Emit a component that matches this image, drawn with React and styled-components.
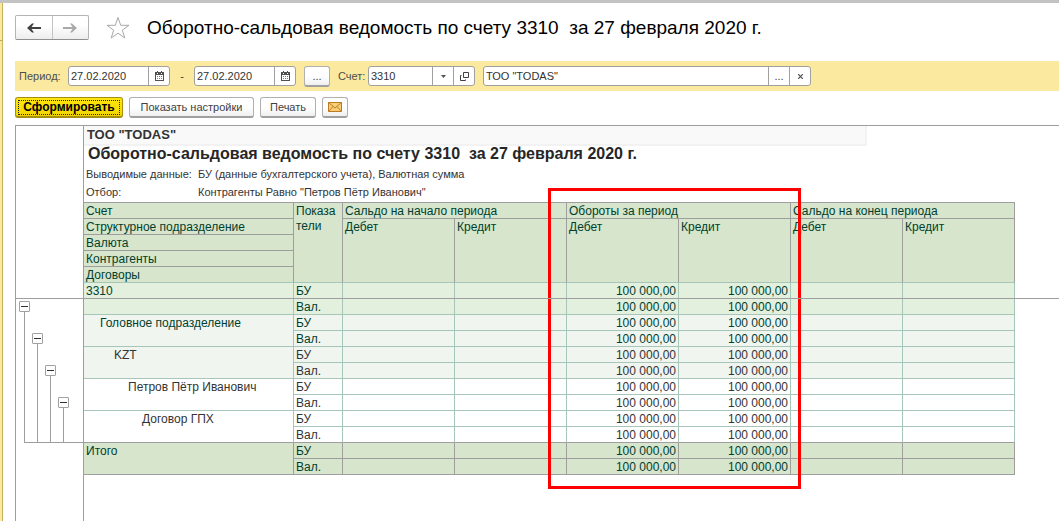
import React from "react";
import styled, { createGlobalStyle, css } from "styled-components";

const line = "#9e9e9e";
const mint = "#a6c6b9";
const ink = "#003f2f";

const GlobalStyle = createGlobalStyle`
  *, *::before, *::after { box-sizing: border-box; }
  html, body, #root { height: 100%; }
  body {
    margin: 0;
    background: #fff;
    color: #404040;
    font: 12px/16px "Liberation Sans", Arial, sans-serif;
  }
  button, input { font: inherit; color: inherit; }
`;

const Window = styled.div`
  display: flex;
  min-height: 100%;
  border-top: 3px solid #c3c3c3;
`;

const SideStrip = styled.aside`
  flex: none;
  width: 3px;
  background: linear-gradient(#c0a850, #c0a850) 0 37px / 100% 1px no-repeat #fce9a0;
  border-right: 1px solid #c6b45f;
`;

const Main = styled.main`
  flex: 1;
  min-width: 0;
  display: flex;
  flex-direction: column;
  padding: 12px 0 0 12px;
`;

const TitleBar = styled.header`
  display: flex;
  align-items: center;
  height: 25px;
  margin-bottom: 21px;
`;

const NavGroup = styled.div`
  display: flex;
  width: 74px;
  height: 25px;
  border: 1px solid #b4b4b4;
  border-bottom-color: #909090;
  border-radius: 2px;
  background: linear-gradient(#fff 40%, #ededed);
`;

const NavButton = styled.button`
  flex: 1;
  display: grid;
  place-items: center;
  padding: 0;
  border: 0;
  background: none;
  color: ${(p) => (p.$dim ? "#a9a9a9" : "#404040")};
  & + & { border-left: 1px solid #c4c4c4; }
`;

const StarButton = styled.button`
  display: grid;
  place-items: center;
  width: 24px;
  height: 25px;
  margin: 0 17px;
  padding: 0;
  border: 0;
  background: none;
`;

const Title = styled.h1`
  margin: 0;
  font-size: 19px;
  line-height: 26px;
  font-weight: 400;
  color: #000;
  white-space: pre;
`;

const FilterBar = styled.section`
  display: flex;
  align-items: center;
  height: 30px;
  padding-left: 4px;
  background: #fce9a0;
  font-size: 11px;
`;

const Label = styled.label`
  width: ${(p) => p.$w}px;
  color: #4d4d4d;
  white-space: nowrap;
`;

const Dash = styled.span`
  width: 24px;
  text-align: center;
`;

const Field = styled.div`
  display: flex;
  flex: 0 1 ${(p) => p.$w}px;
  height: 20px;
  margin-right: ${(p) => p.$gap || 0}px;
  border: 1px solid #a0a0a0;
  border-radius: 3px;
  background: #fff;
  overflow: hidden;
`;

const TextInput = styled.input`
  flex: 1;
  min-width: 0;
  padding: 0 2px;
  border: 0;
  outline: 0;
  background: none;
  color: #333;
`;

const FieldButton = styled.button`
  flex: none;
  display: grid;
  place-items: center;
  width: 21px;
  padding: 0;
  border: 0;
  border-left: 1px solid #a0a0a0;
  background: none;
  color: #404040;
`;

const Button = styled.button`
  display: grid;
  place-items: center;
  width: ${(p) => p.$w}px;
  height: 21px;
  padding: 0;
  border: 1px solid #b0b0b0;
  border-bottom: 2px solid #a0a0a0;
  border-radius: 3px;
  background: linear-gradient(#fff 50%, #f0f0f0);
  color: #404040;
  font-size: 11px;
  line-height: 16px;
  white-space: nowrap;
  ${(p) =>
    p.$primary &&
    css`
      border-color: #a68f10;
      background: linear-gradient(#ffe60d, #f3d600);
      color: #000;
      font-size: 12px;
      font-weight: 700;
      outline: 1px dotted #10204a;
      outline-offset: -4px;
    `}
`;

const MoreButton = styled(Button)`
  margin: 0 8px;
`;

const Commands = styled.div`
  display: flex;
  gap: 6px;
  padding: 6px 0 7px;
`;

const Sheet = styled.section`
  position: relative;
  flex: 1;
  display: flex;
  border-top: 1px solid ${line};
  border-left: 1px solid ${line};
`;

const FreezeLine = styled.div`
  position: absolute;
  top: 172px;
  left: 0;
  right: 0;
  height: 1px;
  background: ${line};
`;

const Gutter = styled.div`
  flex: none;
  width: 68px;
  padding: 175px 0 0 3px;
  border-right: 1px solid ${line};
`;

const Tree = styled.div`
  display: flex;
  gap: 2px;
  height: 141px;
`;

const TreeLevel = styled.div`
  display: flex;
  flex-direction: column;
  align-items: center;
  width: 11px;
  padding-top: ${(p) => p.$level * 32}px;
  &::after {
    content: "";
    flex: 1;
    width: 1px;
    background: ${line};
  }
`;

const Toggle = styled.button`
  display: grid;
  place-items: center;
  width: 11px;
  height: 11px;
  padding: 0;
  border: 1px solid #a0a0a0;
  border-radius: 1px;
  background: #fff;
  &::before {
    content: "";
    width: 7px;
    height: 1px;
    background: #303030;
  }
`;

const TreeEnd = styled.div`
  height: 1px;
  margin-left: 5px;
  background: ${line};
`;

const Report = styled.div`
  flex: 1;
  min-width: 0;
`;

const Organization = styled.div`
  max-width: 783px;
  height: 20px;
  padding-left: 3px;
  border: solid #f2f2f2;
  border-width: 0 2px 2px 0;
  background: #f9f9f9;
  color: #333;
  font-size: 13px;
  line-height: 17px;
  font-weight: 700;
`;

const ReportTitle = styled.h2`
  margin: 0;
  padding-left: 4px;
  color: #262626;
  font-size: 16px;
  line-height: 15px;
  font-weight: 700;
  white-space: pre;
`;

const Meta = styled.dl`
  display: grid;
  grid-template-columns: 112px 1fr;
  margin: 0;
  padding: 4px 0 1px 2px;
  color: #333;
  font-size: 11px;
  line-height: 18px;
`;

const MetaText = styled.dd`
  margin: 0;
  white-space: nowrap;
`;

const TableWrap = styled.div`
  position: relative;
  width: 931px;
`;

const Highlight = styled.div`
  position: absolute;
  top: -14px;
  left: 464px;
  width: 253px;
  height: 301px;
  border: 3px solid #f00;
  pointer-events: none;
`;

const Table = styled.table`
  table-layout: fixed;
  width: 100%;
  border-top: 1px solid ${line};
  border-spacing: 0;
  border-collapse: separate;
`;

const cell = css`
  height: 16px;
  padding: 2px 2px 0;
  font-weight: 400;
  line-height: 13px;
  text-align: left;
  vertical-align: top;
  border: solid ${line};
  border-width: 0 1px 1px 0;
`;

const HeadCell = styled.th`
  ${cell}
  background: #d6e5cb;
  color: ${ink};
  ${(p) => p.$last && `border-bottom-color: ${mint};`}
  ${(p) => p.$wrap && "padding-top: 1px; line-height: 15px;"}
`;

const tones = {
  account: css`background: #e3f0dd; color: ${ink}; border-color: ${mint};`,
  group: css`background: #f0f5ef; color: ${ink}; border-color: ${mint};`,
  groupPlain: css`background: #f0f5ef; color: #333; border-color: ${mint};`,
  plain: css`background: #fff; color: #333; border-color: ${mint};`,
  total: css`background: #d6e5cb; color: ${ink};`,
};

const Cell = styled.td`
  ${cell}
  ${(p) => tones[p.$tone]}
  ${(p) => p.$closing && `border-bottom-color: ${line};`}
  ${(p) => p.$amount && "text-align: right;"}
`;

const NameCell = styled(Cell).attrs({ as: "th", scope: "rowgroup" })`
  padding-left: ${(p) => 2 + p.$level * 14}px;
`;

const Arrow = ({ flip }) => (
  <svg width="14" height="10" viewBox="0 0 14 10" fill="currentColor">
    <path
      d={
        flip
          ? "M14 5L9 0.500H7L9.500 4H0V6H9.500L7 9.500H9Z"
          : "M0 5L5 0.500H7L4.500 4H14V6H4.500L7 9.500H5Z"
      }
    />
  </svg>
);

const Star = () => (
  <svg width="24" height="24" viewBox="0 0 24 24" fill="#fff" stroke="#a8a8a8">
    <path d="M12 1.500L14.700 9.300H23L16.300 14.200L18.800 22L12 17.200L5.200 22L7.700 14.200L1 9.300H9.300Z" />
  </svg>
);

const Calendar = () => (
  <svg width="9" height="10" viewBox="0 0 9 10" fill="#505050" shapeRendering="crispEdges">
    <path d="M0 1H9V10H0ZM1 4V9H8V4Z" fillRule="evenodd" />
    <path d="M2 0H3V1H2ZM6 0H7V1H6Z" />
    <path
      d="M2 5H3V6H2ZM4 5H5V6H4ZM6 5H7V6H6ZM2 7H3V8H2ZM4 7H5V8H4ZM6 7H7V8H6Z"
      fill="#7c7c7c"
    />
    <path d="M2 2H3V3H2ZM6 2H7V3H6Z" fill="#fff" />
  </svg>
);

const Caret = () => (
  <svg width="5" height="3" viewBox="0 0 5 3" fill="#505050">
    <path d="M0 0H5L2.500 3Z" />
  </svg>
);

const OpenIcon = () => (
  <svg width="9" height="9" viewBox="0 0 9 9" fill="none" stroke="#404040">
    <path d="M3.500 0.500H8.500V5.500H3.500ZM1.500 3.500H0.500V8.500H5.500V7.500" />
  </svg>
);

const Cross = () => (
  <svg width="5" height="5" viewBox="0 0 5 5" fill="none" stroke="#505050" strokeWidth="1.2">
    <path d="M0 0L5 5M5 0L0 5" />
  </svg>
);

const Mail = () => (
  <svg width="14" height="10" viewBox="0 0 14 10" stroke="#c07c1c">
    <path d="M0.500 0.500H13.500V9.500H0.500Z" fill="#f8cf79" />
    <path d="M0.500 0.500L7 6L13.500 0.500M0.500 9.500L5 4.500M13.500 9.500L9 4.500" fill="none" />
  </svg>
);

const reportTitle = "Оборотно-сальдовая ведомость по счету 3310  за 27 февраля 2020 г.";
const amounts = ["", "", "100 000,00", "100 000,00", "", ""];
const periods = ["Сальдо на начало периода", "Обороты за период", "Сальдо на конец периода"];

const rows = [
  { name: "3310", level: 0, tone: "account" },
  { name: "Головное подразделение", level: 1, tone: "group" },
  { name: "KZT", level: 2, tone: "groupPlain" },
  { name: "Петров Пётр Иванович", level: 3, tone: "plain" },
  { name: "Договор ГПХ", level: 4, tone: "plain", closing: true },
  { name: "Итого", level: 0, tone: "total" },
];

const DateField = ({ id, label, value }) => (
  <Field $w={102}>
    <TextInput id={id} aria-label={label} defaultValue={value} />
    <FieldButton aria-label="Выбрать дату"><Calendar /></FieldButton>
  </Field>
);

const Amounts = ({ tone, closing }) =>
  amounts.map((value, i) => (
    <Cell key={i} $tone={tone} $closing={closing} $amount>{value}</Cell>
  ));

const AccountRows = ({ name, level, tone, closing }) => (
  <tbody>
    <tr>
      <NameCell rowSpan={2} $level={level} $tone={tone} $closing={closing}>{name}</NameCell>
      <Cell $tone={tone}>БУ</Cell>
      <Amounts tone={tone} />
    </tr>
    <tr>
      <Cell $tone={tone} $closing={closing}>Вал.</Cell>
      <Amounts tone={tone} closing={closing} />
    </tr>
  </tbody>
);

const BalanceTable = () => (
  <Table>
    <colgroup>
      <col style={{ width: 210 }} />
      <col style={{ width: 49 }} />
      {amounts.map((_, i) => <col key={i} style={{ width: 112 }} />)}
    </colgroup>
    <thead>
      <tr>
        <HeadCell>Счет</HeadCell>
        <HeadCell rowSpan={5} $last $wrap>Показа<br />тели</HeadCell>
        {periods.map((p) => <HeadCell key={p} colSpan={2}>{p}</HeadCell>)}
      </tr>
      <tr>
        <HeadCell>Структурное подразделение</HeadCell>
        {amounts.map((_, i) => (
          <HeadCell key={i} rowSpan={4} $last>{i % 2 ? "Кредит" : "Дебет"}</HeadCell>
        ))}
      </tr>
      <tr><HeadCell>Валюта</HeadCell></tr>
      <tr><HeadCell>Контрагенты</HeadCell></tr>
      <tr><HeadCell $last>Договоры</HeadCell></tr>
    </thead>
    {rows.map((row) => <AccountRows key={row.name} {...row} />)}
  </Table>
);

export default function App() {
  return (
    <>
      <GlobalStyle />
      <Window>
        <SideStrip />
        <Main>
          <TitleBar>
            <NavGroup>
              <NavButton aria-label="Назад"><Arrow /></NavButton>
              <NavButton aria-label="Вперед" $dim><Arrow flip /></NavButton>
            </NavGroup>
            <StarButton aria-label="В избранное"><Star /></StarButton>
            <Title>{reportTitle}</Title>
          </TitleBar>
          <FilterBar>
            <Label htmlFor="from" $w={49}>Период:</Label>
            <DateField id="from" value="27.02.2020" />
            <Dash>-</Dash>
            <DateField id="to" label="Конец периода" value="27.02.2020" />
            <MoreButton $w={26} aria-label="Выбрать период">...</MoreButton>
            <Label htmlFor="account" $w={30}>Счет:</Label>
            <Field $w={107} $gap={8}>
              <TextInput id="account" defaultValue="3310" />
              <FieldButton aria-label="Список счетов"><Caret /></FieldButton>
              <FieldButton aria-label="Открыть счет"><OpenIcon /></FieldButton>
            </Field>
            <Field $w={328}>
              <TextInput aria-label="Организация" defaultValue={'ТОО "TODAS"'} />
              <FieldButton aria-label="Выбрать организацию">...</FieldButton>
              <FieldButton aria-label="Очистить"><Cross /></FieldButton>
            </Field>
          </FilterBar>
          <Commands>
            <Button $w={108} $primary>Сформировать</Button>
            <Button $w={125}>Показать настройки</Button>
            <Button $w={56}>Печать</Button>
            <Button $w={26} aria-label="Отправить по почте"><Mail /></Button>
          </Commands>
          <Sheet>
            <Gutter>
              <Tree>
                {[0, 1, 2, 3].map((level) => (
                  <TreeLevel key={level} $level={level}>
                    <Toggle aria-label="Свернуть группу" />
                  </TreeLevel>
                ))}
              </Tree>
              <TreeEnd />
            </Gutter>
            <Report>
              <Organization>ТОО "TODAS"</Organization>
              <ReportTitle>{reportTitle}</ReportTitle>
              <Meta>
                <dt>Выводимые данные:</dt>
                <MetaText>БУ (данные бухгалтерского учета), Валютная сумма</MetaText>
                <dt>Отбор:</dt>
                <MetaText>Контрагенты Равно "Петров Пётр Иванович"</MetaText>
              </Meta>
              <TableWrap>
                <BalanceTable />
                <Highlight />
              </TableWrap>
            </Report>
            <FreezeLine />
          </Sheet>
        </Main>
      </Window>
    </>
  );
}
